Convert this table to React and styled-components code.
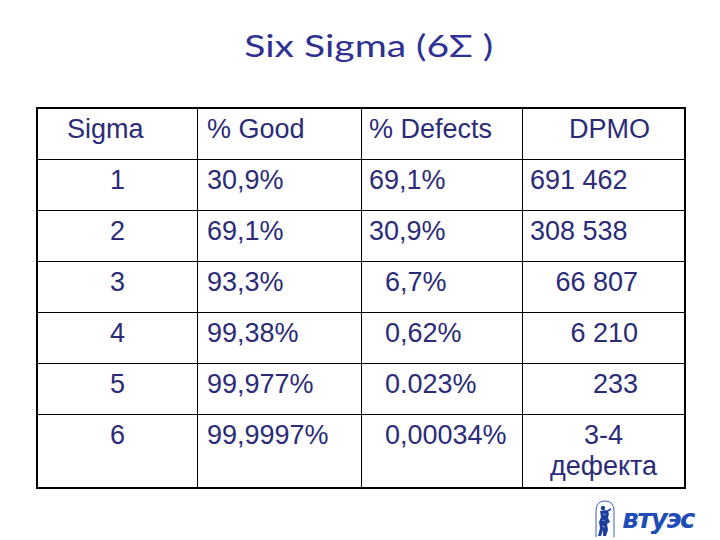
import React from "react";
import styled, { createGlobalStyle } from "styled-components";

const Global = createGlobalStyle`
  html, body { margin: 0; padding: 0; background: #ffffff; }
  body { width: 720px; height: 540px; overflow: hidden; }
`;

const Page = styled.div`
  width: 720px;
  height: 540px;
  display: flex;
  flex-direction: column;
  background: #ffffff;
`;

const Header = styled.header`
  height: 107px;
  box-sizing: border-box;
  padding: 27px 0 0 18px;
  display: flex;
  justify-content: center;
  align-items: flex-start;
`;

const Title = styled.h1`
  display: inline-block;
  margin: 0;
  font-family: "Lato", "Open Sans", sans-serif;
  font-weight: 400;
  font-size: 30px;
  line-height: 36px;
  color: #2e3192;
  transform: scaleX(1.3);
  transform-origin: center;
`;

const Table = styled.div`
  margin-left: 36px;
  width: 650px;
  box-sizing: border-box;
  border: 2px solid #000;
  display: grid;
  grid-template-columns: 160px 164px 161px 1fr;
  grid-template-rows: repeat(6, 51px) 72px;
  font-family: "Liberation Sans", Arial, sans-serif;
  font-size: 27px;
  line-height: 31px;
  color: #2b2b78;
`;

const Cell = styled.div`
  box-sizing: border-box;
  padding: 5px ${(p) => p.$pr}px 0 ${(p) => p.$pl}px;
  text-align: ${(p) => p.$align};
  border-right: ${(p) => (p.$lastCol ? "none" : "1px solid #000")};
  border-bottom: ${(p) => (p.$lastRow ? "none" : "1px solid #000")};
  white-space: nowrap;
`;

const Footer = styled.footer`
  display: flex;
  justify-content: flex-end;
  align-items: center;
  gap: 6px;
  padding: 11px 26px 0 0;
`;

const LogoText = styled.span`
  font-family: "DejaVu Sans", sans-serif;
  font-weight: 700;
  font-style: italic;
  font-size: 26px;
  letter-spacing: -1.5px;
  line-height: 28px;
  color: #1f4db5;
`;

const rows = [
  [
    { t: "Sigma", pl: 29 },
    { t: "% Good" },
    { t: "% Defects" },
    { t: "DPMO", pl: 46 },
  ],
  [{ t: "1", align: "center" }, { t: "30,9%" }, { t: "69,1%" }, { t: "691 462" }],
  [{ t: "2", align: "center" }, { t: "69,1%" }, { t: "30,9%" }, { t: "308 538" }],
  [
    { t: "3", align: "center" },
    { t: "93,3%" },
    { t: "6,7%", pl: 23 },
    { t: "66 807", align: "right", pr: 46 },
  ],
  [
    { t: "4", align: "center" },
    { t: "99,38%" },
    { t: "0,62%", pl: 23 },
    { t: "6 210", align: "right", pr: 46 },
  ],
  [
    { t: "5", align: "center" },
    { t: "99,977%" },
    { t: "0.023%", pl: 23 },
    { t: "233", align: "right", pr: 46 },
  ],
  [
    { t: "6", align: "center" },
    { t: "99,9997%" },
    { t: "0,00034%", pl: 23 },
    { t: ["3-4", "дефекта"], align: "center", pl: 0 },
  ],
];

const defaultPl = [0, 9, 7, 7];

function Figure() {
  return (
    <svg width="22" height="38" viewBox="0 0 22 38">
      <path
        d="M2 37 V11 Q2 1 11 1 Q20 1 20 11 V37"
        fill="none"
        stroke="#3a5fb8"
        strokeWidth="1"
      />
      <circle cx="9" cy="8" r="2.2" fill="#1c3f9e" />
      <path
        d="M6 11 L12 10 L15 13 L14 18 L16 22 L13 24 L14 30 L12 36 L9 36 L9 30 L7 36 L4 36 L6 28 L5 22 L7 17 Z"
        fill="#1c3f9e"
      />
      <path d="M9 14 L12 15 M8 20 L11 21 M8 26 L11 27" stroke="#8fa8e0" strokeWidth="0.8" />
      <path d="M12 12 L17 9" stroke="#1c3f9e" strokeWidth="1.5" />
    </svg>
  );
}

export default function App() {
  return (
    <Page>
      <Global />
      <Header>
        <Title>Six Sigma (6Σ )</Title>
      </Header>
      <Table>
        {rows.map((row, r) =>
          row.map((c, i) => (
            <Cell
              key={`${r}-${i}`}
              $align={c.align || "left"}
              $pl={c.pl !== undefined ? c.pl : c.align === "center" ? 0 : defaultPl[i]}
              $pr={c.pr || 0}
              $lastCol={i === 3}
              $lastRow={r === rows.length - 1}
            >
              {Array.isArray(c.t)
                ? c.t.map((line, k) => <div key={k}>{line}</div>)
                : c.t}
            </Cell>
          ))
        )}
      </Table>
      <Footer>
        <Figure />
        <LogoText>втуэс</LogoText>
      </Footer>
    </Page>
  );
}
